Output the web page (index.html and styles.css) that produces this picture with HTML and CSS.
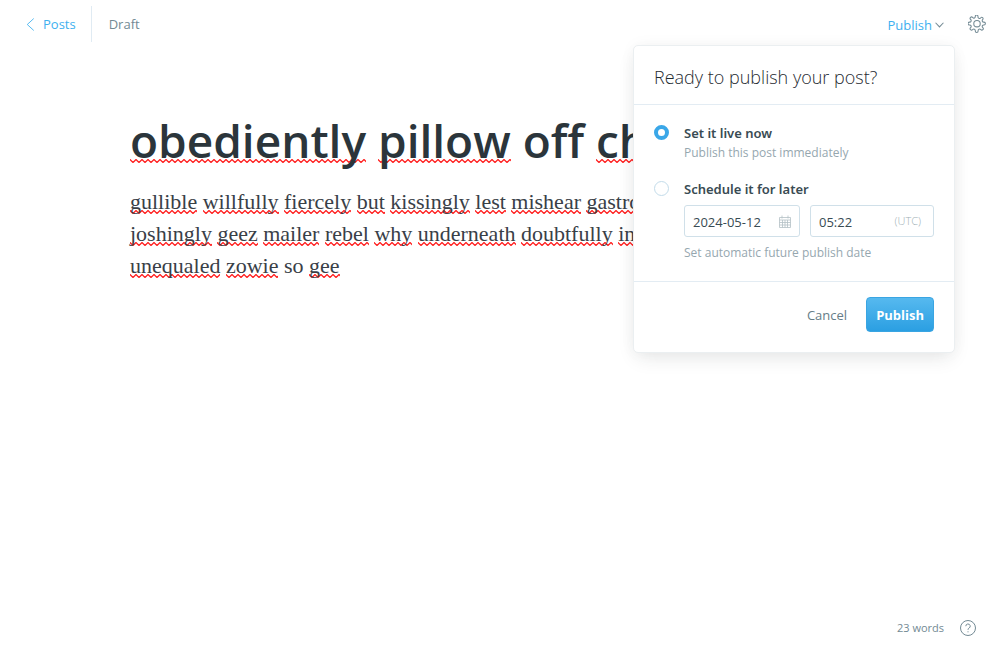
FILE: index.html
```html
<!DOCTYPE html>
<html lang="en">
<head>
<meta charset="utf-8">
<meta name="viewport" content="width=device-width, initial-scale=1">
<title>Post editor</title>
<link rel="stylesheet" href="styles.css">
</head>
<body>
<div class="editor">
  <header class="topbar">
    <nav class="crumbs">
      <a class="back" href="#">
        <svg class="back-icon" viewBox="0 0 8 12" aria-hidden="true"><path d="M7 .5 1 6l6 5.500"/></svg>
        Posts
      </a>
      <span class="status">Draft</span>
    </nav>
    <div class="actions">
      <div class="menu">
        <button class="menu-toggle" type="button" aria-expanded="true">Publish
          <svg class="caret" viewBox="0 0 8 5" aria-hidden="true"><path d="M.5.5 4 4.200 7.500.5"/></svg>
        </button>
        <form class="panel">
          <h2 class="panel-title">Ready to publish your post?</h2>
          <div class="panel-body">
            <div class="option">
              <input class="radio" type="radio" name="when" id="now" checked>
              <div class="option-text">
                <label class="option-label" for="now">Set it live now</label>
                <p class="hint">Publish this post immediately</p>
              </div>
            </div>
            <div class="option">
              <input class="radio" type="radio" name="when" id="later">
              <div class="option-text">
                <label class="option-label" for="later">Schedule it for later</label>
                <div class="fields">
                  <div class="field field-date">
                    <input class="field-input" type="text" value="2024-05-12" aria-label="Publish date">
                    <svg class="calendar" viewBox="0 0 12 13" aria-hidden="true"><path d="M.5 2.500h11v10H.5zM.5 5h11M.5 7.500h11M.5 10h11M3.500 5v7.500M6 5v7.500M8.500 5v7.500M3 .5v3M9 .5v3"/></svg>
                  </div>
                  <div class="field field-time">
                    <input class="field-input" type="text" value="05:22" aria-label="Publish time">
                    <span class="zone">(UTC)</span>
                  </div>
                </div>
                <p class="hint">Set automatic future publish date</p>
              </div>
            </div>
          </div>
          <div class="panel-footer">
            <button class="cancel" type="button">Cancel</button>
            <button class="submit" type="submit">Publish</button>
          </div>
        </form>
      </div>
      <button class="settings" type="button" aria-label="Settings">
        <svg class="gear" viewBox="0 0 24 24" aria-hidden="true"><path d="M13.300 2.700a1.900 1.900 0 0 0 3.200 1.400l.4-.4a1.800 1.800 0 0 1 2.800 2.300l-.2.300a1.900 1.900 0 0 0 1.400 3.200h.4a1.900 1.900 0 0 1 0 3.800h-.4a1.900 1.900 0 0 0-1.400 3.200l.3.400a1.900 1.900 0 0 1-2.700 2.700l-.4-.3a1.900 1.900 0 0 0-3.200 1.400v.6a1.900 1.900 0 0 1-3.800 0v-.6a1.900 1.900 0 0 0-3.200-1.400l-.4.300a1.900 1.900 0 0 1-2.700-2.700l.3-.4a1.900 1.900 0 0 0-1.400-3.200h-.4a1.900 1.900 0 0 1 0-3.800h.4a1.900 1.900 0 0 0 1.400-3.200l-.3-.4a1.900 1.900 0 0 1 2.700-2.700l.4.400a1.900 1.900 0 0 0 3.200-1.400v-.3a1.800 1.800 0 0 1 3.600 0z"/><circle cx="12" cy="11.500" r="4.300"/></svg>
      </button>
    </div>
  </header>
  <main class="post">
    <h1 class="post-title"><span class="typo">obediently</span> <span class="typo">pillow</span> off <span class="typo">ch</span></h1>
    <p class="post-body"><span class="typo">gullible</span> <span class="typo">willfully</span> <span class="typo">fiercely</span> <span class="typo">but</span> <span class="typo">kissingly</span> <span class="typo">lest</span> <span class="typo">mishear</span> <span class="typo">gastro</span><br>
      <span class="typo">joshingly</span> <span class="typo">geez</span> <span class="typo">mailer</span> <span class="typo">rebel</span> <span class="typo">why</span> <span class="typo">underneath</span> <span class="typo">doubtfully</span> <span class="typo">in</span><br>
      <span class="typo">unequaled</span> <span class="typo">zowie</span> so <span class="typo">gee</span></p>
  </main>
  <footer class="bottombar">
    <span>23 words</span>
    <a class="help" href="#" aria-label="Help">
      <svg class="help-icon" viewBox="0 0 16 16" aria-hidden="true"><circle cx="8" cy="8" r="7.500"/><path d="M5.800 6.200a2.200 2.200 0 1 1 3.300 1.900C8.300 8.500 8 8.900 8 9.800M8 11.300v1"/></svg>
    </a>
  </footer>
</div>
</body>
</html>
```
FILE: styles.css
```css
*, *::before, *::after { box-sizing: border-box; }

body {
  margin: 0;
  background: #fff;
  color: #738a94;
  font: 13px/20px "Open Sans", sans-serif;
}

h1, h2, p { margin: 0; }
a { color: inherit; text-decoration: none; }
button {
  padding: 0;
  border: 0;
  background: none;
  color: inherit;
  font: inherit;
}
svg { flex: none; fill: none; stroke: currentColor; }

.editor {
  display: flex;
  flex-direction: column;
  min-height: 100vh;
}

.topbar {
  display: flex;
  align-items: center;
  justify-content: space-between;
  height: 48px;
  padding: 0 14px 0 26px;
}
.crumbs { display: flex; align-items: center; }
.back {
  display: flex;
  align-items: center;
  gap: 8px;
  height: 36px;
  padding-right: 15px;
  border-right: 1px solid #e0ebf3;
  color: #3eb0ef;
}
.back-icon { width: 9px; height: 13px; stroke-width: 0.8; }
.status { padding-left: 17px; }

.actions { display: flex; align-items: center; gap: 24px; }
.menu { position: relative; }
.menu-toggle {
  display: flex;
  align-items: center;
  gap: 3px;
  margin-top: 2px;
  color: #3eb0ef;
}
.caret { width: 9px; height: 6px; color: #738a94; stroke-width: 0.9; }
.settings { display: flex; }
.gear { width: 18px; height: 18px; stroke-width: 1.4; }

.panel {
  position: absolute;
  z-index: 1;
  top: 32px;
  right: -11px;
  width: 322px;
  border: 1px solid #ebeff1;
  border-radius: 5px;
  background: #fff;
  color: #394b53;
  box-shadow: 0 8px 20px -4px rgba(39, 44, 49, 0.11), 0 0 16px rgba(39, 44, 49, 0.04);
}
.panel-title {
  padding: 19px 20px 15px;
  border-bottom: 1px solid #e3ecf3;
  color: #1f2b31;
  font-size: 18px;
  font-weight: 300;
  line-height: 24px;
}
.panel-body {
  display: grid;
  gap: 16px;
  padding: 18px 20px;
}
.option { display: flex; gap: 15px; }
.option-text { flex: 1; min-width: 0; }
.option-label {
  display: block;
  font-family: "Noto Sans", sans-serif;
  font-weight: 600;
}
.hint {
  color: #96a7af;
  font-size: 12px;
}
.radio {
  flex: none;
  width: 15px;
  height: 15px;
  margin: 2px 0 0;
  border: 1px solid #c3dcea;
  border-radius: 50%;
  appearance: none;
  background: #fff;
}
.radio:checked { border: 4px solid #3aa7e8; }

.fields {
  display: grid;
  grid-template-columns: 116px minmax(0, 1fr);
  gap: 10px;
  margin: 6px 0;
}
.field {
  display: flex;
  align-items: center;
  height: 32px;
  padding: 0 8px;
  border: 1px solid #d0e0e9;
  border-radius: 3px;
}
.field-input {
  flex: 1;
  min-width: 0;
  padding: 2px 0 0;
  border: 0;
  outline: 0;
  background: none;
  color: #394b53;
  font: inherit;
}
.calendar { width: 12px; height: 13px; color: #b4c0c5; stroke-width: 0.8; }
.zone { padding-right: 4px; color: #a0afb6; font-size: 11px; font-weight: 300; }

.panel-footer {
  display: flex;
  align-items: center;
  justify-content: flex-end;
  gap: 19px;
  padding: 15px 20px 20px;
  border-top: 1px solid #e3ecf3;
}
.cancel { color: #667d87; }
.submit {
  height: 35px;
  padding: 0 9px;
  border: 1px solid #3aa5e2;
  border-radius: 4px;
  background: linear-gradient(#56b9ef, #2b9fe2);
  color: #fff;
  font-weight: 700;
}

.post {
  flex: 1;
  padding: 64px 130px 0;
  color: #394047;
  white-space: nowrap;
}
.post-title {
  color: #2b353b;
  font-size: 46px;
  font-weight: 600;
  line-height: 56px;
}
.post-body {
  margin-top: 18px;
  font: 22px/32px "Liberation Serif", serif;
}
.typo {
  background: url("data:image/svg+xml,%3Csvg xmlns='http://www.w3.org/2000/svg' width='6' height='4'%3E%3Cpath d='M-1 -.5 3 3.500 7 -.5' fill='none' stroke='%23f22' stroke-width='1.300'/%3E%3C/svg%3E") left bottom / 6px 4px repeat-x;
}
.post-title .typo { background-position: left bottom 8px; }

.bottombar {
  display: flex;
  align-items: center;
  justify-content: flex-end;
  gap: 16px;
  padding: 0 24px 22px;
  font-size: 11px;
}
.help-icon { display: block; width: 16px; height: 16px; }
```
